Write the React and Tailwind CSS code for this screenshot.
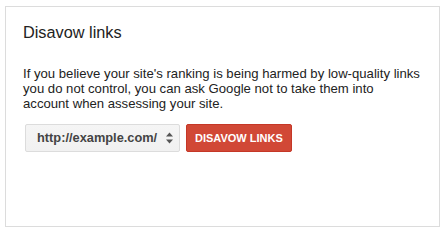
import React from "react";

export default function App() {
  return (
    <div className="w-[446px] h-[233px] bg-white pl-[5px] pt-[6px]" style={{ fontFamily: '"Liberation Sans", Arial, sans-serif' }}>
      <div className="w-[435px] h-[221px] border border-[#dcdcdc] px-[17px] pt-[15px]">
        <h2 className="text-[16.3px] leading-[20px] text-[#222]">Disavow links</h2>
        <p className="mt-[24px] text-[13.15px] leading-[15px] text-[#222] whitespace-nowrap">
          If you believe your site's ranking is being harmed by low-quality links<br />
          you do not control, you can ask Google not to take them into<br />
          account when assessing your site.
        </p>
        <div className="mt-[13px] flex items-center gap-[6px] pl-[2px]">
          <div className="relative w-[155px] h-[28px] rounded-[2px] border border-[#dcdcdc] bg-gradient-to-b from-[#f5f5f5] to-[#f1f1f1] flex items-center pl-[11px]">
            <span className="text-[12.8px] font-bold text-[#444]">http://example.com/</span>
            <svg className="absolute right-[6px] top-1/2 -translate-y-1/2" width="7" height="12" viewBox="0 0 7 12">
              <path d="M3.5 0.5 L7 4.5 L0 4.5 Z" fill="#555" />
              <path d="M3.5 11.5 L7 7.5 L0 7.5 Z" fill="#555" />
            </svg>
          </div>
          <button className="h-[28px] px-[8px] rounded-[2px] bg-[#d14836] border border-[#c53727] text-white text-[11px] font-bold uppercase">
            Disavow links
          </button>
        </div>
      </div>
    </div>
  );
}
